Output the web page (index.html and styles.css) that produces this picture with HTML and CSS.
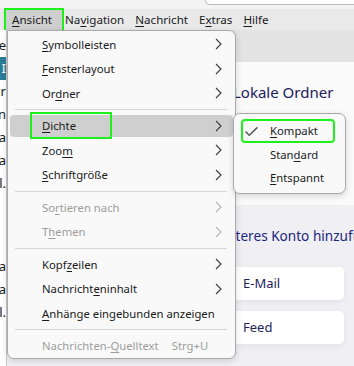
FILE: index.html
```html
<!DOCTYPE html>
<html lang="de">
<head>
    <meta charset="UTF-8">
    <meta name="viewport" content="width=device-width, initial-scale=1.0">
    <title>Ansicht - Dichte</title>
    <link rel="stylesheet" href="styles.css">
</head>
<body>
    <div class="window">
        <div class="titlebar">
            <div class="search"></div>
        </div>

        <nav class="menubar">
            <span class="menubar-item is-open"><u>A</u>nsicht</span>
            <span class="menubar-item">Na<u>v</u>igation</span>
            <span class="menubar-item"><u>N</u>achricht</span>
            <span class="menubar-item">E<u>x</u>tras</span>
            <span class="menubar-item"><u>H</u>ilfe</span>
        </nav>

        <div class="workspace">
            <aside class="folders">
                <div class="folder-line">Ne</div>
                <div class="folder-line is-selected">I</div>
                <div class="folder-line">Ordr</div>
                <div class="folder-line">Posteingan</div>
                <div class="folder-line">Spa</div>
                <div class="folder-line">Spa</div>
                <div class="folder-line">Vol.</div>
                <div class="folder-gap"></div>
                <div class="folder-line">Spa</div>
                <div class="folder-line">Spa</div>
                <div class="folder-line">Vol.</div>
            </aside>
            <main class="content">
                <div class="content-head"></div>
                <section class="account">
                    <h2>Lokale Ordner</h2>
                </section>
                <section class="setup">
                    <h3>Weiteres Konto hinzufügen</h3>
                    <div class="card">E-Mail</div>
                    <div class="card">Feed</div>
                </section>
            </main>
        </div>

        <!-- Ansicht menu -->
        <div class="menu main-menu">
            <div class="item"><span><u>S</u>ymbolleisten</span><svg class="arrow" viewBox="0 0 7 12"><path d="M1 1 L6 6 L1 11"/></svg></div>
            <div class="item"><span><u>F</u>ensterlayout</span><svg class="arrow" viewBox="0 0 7 12"><path d="M1 1 L6 6 L1 11"/></svg></div>
            <div class="item"><span>Or<u>d</u>ner</span><svg class="arrow" viewBox="0 0 7 12"><path d="M1 1 L6 6 L1 11"/></svg></div>
            <div class="sep"></div>
            <div class="item is-active"><span><u>D</u>ichte</span><svg class="arrow" viewBox="0 0 7 12"><path d="M1 1 L6 6 L1 11"/></svg><span class="mark"></span></div>
            <div class="item"><span>Zoo<u>m</u></span><svg class="arrow" viewBox="0 0 7 12"><path d="M1 1 L6 6 L1 11"/></svg></div>
            <div class="item"><span><u>S</u>chriftgröße</span><svg class="arrow" viewBox="0 0 7 12"><path d="M1 1 L6 6 L1 11"/></svg></div>
            <div class="sep"></div>
            <div class="item is-disabled"><span>So<u>r</u>tieren nach</span><svg class="arrow" viewBox="0 0 7 12"><path d="M1 1 L6 6 L1 11"/></svg></div>
            <div class="item is-disabled"><span>T<u>h</u>emen</span><svg class="arrow" viewBox="0 0 7 12"><path d="M1 1 L6 6 L1 11"/></svg></div>
            <div class="sep"></div>
            <div class="item"><span>Kopf<u>z</u>eilen</span><svg class="arrow" viewBox="0 0 7 12"><path d="M1 1 L6 6 L1 11"/></svg></div>
            <div class="item"><span>Nachricht<u>e</u>ninhalt</span><svg class="arrow" viewBox="0 0 7 12"><path d="M1 1 L6 6 L1 11"/></svg></div>
            <div class="item"><span><u>A</u>nhänge eingebunden anzeigen</span></div>
            <div class="sep"></div>
            <div class="item is-disabled"><span class="label">Nachrichten-<u>Q</u>uelltext</span><span class="shortcut">Strg+U</span></div>
        </div>

        <!-- Dichte submenu -->
        <div class="menu sub-menu">
            <div class="item is-checked">
                <svg class="check" viewBox="0 0 16 12"><path d="M1.5 6 L5.5 10 L14.5 1.5"/></svg>
                <span><u>K</u>ompakt</span>
            </div>
            <div class="item"><span>Stan<u>d</u>ard</span></div>
            <div class="item"><span><u>E</u>ntspannt</span></div>
        </div>
    </div>
</body>
</html>
```

FILE: styles.css
```css
body {
    margin: 0;
    font-family: "Noto Sans", "Segoe UI", Arial, sans-serif;
    font-size: 11.3px;
    color: #1a1a1a;
    background: #f0f0f4;
}
u {
    text-decoration-thickness: 1px;
    text-underline-offset: 2px;
}
.window {
    position: relative;
    width: 354px;
    height: 366px;
    overflow: hidden;
    white-space: nowrap;
}

/* title strip with the search box */
.titlebar {
    height: 9px;
    background: #f3f3f3;
    display: flex;
}
.search {
    margin-left: 205px;
    flex: 1;
    height: 4px;
    background: #fff;
    border: 1px solid #b9b9b9;
    border-top: none;
    border-right: none;
    border-radius: 0 0 0 5px;
}

/* menubar */
.menubar {
    height: 21px;
    background: #e9e9e9;
    display: flex;
    align-items: center;
    padding-left: 6px;
    font-size: 11.6px;
}
.menubar-item {
    height: 20px;
    line-height: 20px;
    padding: 0 5.5px;
}
.menubar-item.is-open {
    background: #cfcfcf;
    padding: 0 10px 0 6px;
    outline: 2px solid #1ef01e;
}
.menubar-item.is-open + .menubar-item {
    padding-left: 3px;
}

/* background window */
.workspace {
    display: flex;
    height: 336px;
}
.folders {
    flex: 0 0 6px;
    border-right: 1px solid #c9c9c9;
    background: #fff;
    overflow: hidden;
    padding-top: 4px;
    font-size: 13px;
}
.folder-line {
    height: 23px;
    line-height: 23px;
    display: flex;
    justify-content: flex-end;
}
.folder-line.is-selected {
    background: #2a7d96;
    color: #fff;
}
.folder-gap {
    height: 60px;
}
.content {
    flex: 1;
    min-width: 0;
    overflow: hidden;
    display: flex;
    flex-direction: column;
}
.content-head {
    height: 32px;
    background: #e3e3e3;
}
.account {
    height: 143px;
    background: #fafafa;
    padding-left: 226px;
}
.account h2 {
    margin: 20px 0 0;
    font-size: 15px;
    font-weight: normal;
    color: #20205a;
}
.setup {
    flex: 1;
    padding: 21px 10px 0 205px;
}
.setup h3 {
    margin: 0 0 21px;
    font-size: 13.6px;
    line-height: 20px;
    font-weight: normal;
    color: #1c2580;
}
.card {
    margin: 0 0 11px 20px;
    height: 33px;
    line-height: 33px;
    padding-left: 11px;
    background: #fff;
    border-radius: 5px;
    box-shadow: 0 2px 6px rgba(0, 0, 0, 0.06);
    font-size: 13px;
    color: #23235a;
}

/* popup menus */
.menu {
    position: absolute;
    display: flex;
    flex-direction: column;
    background: #f9f9f9;
    border: 1px solid #a9a9a9;
    border-radius: 7px;
    box-shadow: 0 2px 6px rgba(0, 0, 0, 0.15);
}
.main-menu {
    left: 7px;
    top: 30px;
    width: 227px;
    padding: 1px 0 0;
    border-top-left-radius: 0;
}
.sub-menu {
    left: 233px;
    top: 113px;
    width: 111px;
    padding: 5px 0 3px;
}
.item {
    position: relative;
    display: flex;
    align-items: center;
    flex: 0 0 22.5px;
    margin: 1px 2px;
    padding: 0 11px 0 32px;
    border-radius: 4px;
}
.item span:first-child {
    flex: 1;
}
.item span.label {
    flex: 0 0 auto;
}
.item.is-active {
    background: #cfcfcf;
}
.item.is-disabled {
    color: #9d9d9d;
}
.arrow {
    width: 7px;
    height: 12px;
    fill: none;
    stroke: #3a3a3a;
    stroke-width: 1.1;
}
.is-disabled .arrow {
    stroke: #b4b4b4;
}
.shortcut {
    margin-left: 13px;
}
.sep {
    flex: 0 0 8px;
    display: flex;
    align-items: center;
    padding: 0 8px 0 7px;
}
.sep::before {
    content: "";
    flex: 1;
    height: 1px;
    background: #d6d6d6;
}
.mark {
    position: absolute;
    left: 20px;
    top: -3px;
    width: 78px;
    height: 23px;
    border: 2px solid #1ef01e;
}
.sub-menu .item {
    margin: 0 10px 0 7px;
    flex-basis: 23.5px;
    padding-left: 29px;
}
.sub-menu .item.is-checked {
    outline: 2px solid #1ef01e;
    outline-offset: -2px;
}
.check {
    position: absolute;
    left: 3px;
    top: 7px;
    width: 15px;
    height: 11px;
    fill: none;
    stroke: #555;
    stroke-width: 1.6;
}
```
